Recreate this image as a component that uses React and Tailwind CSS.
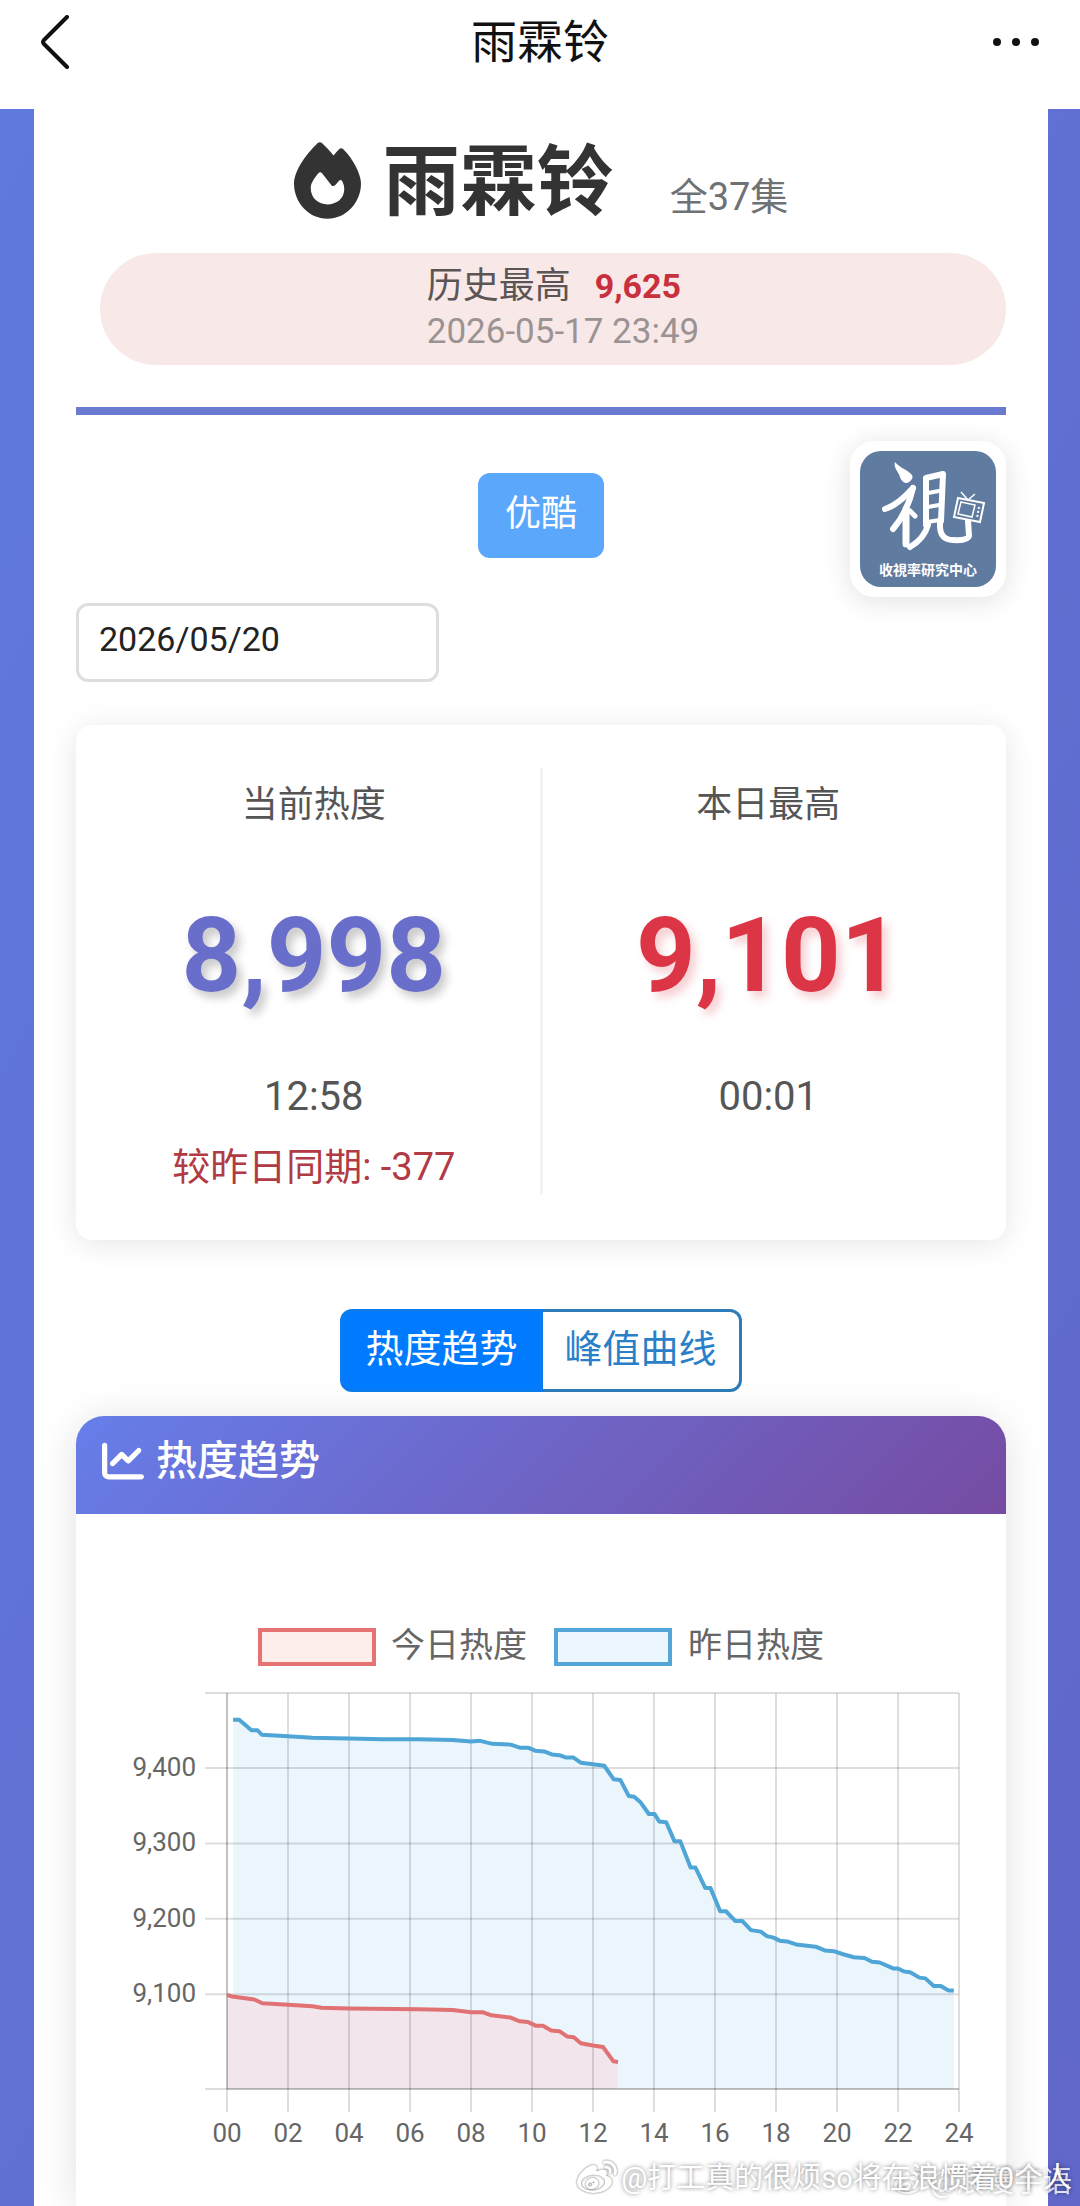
import React, { useState } from "react";
import { FaChartLine, FaFire, FaWeibo } from "react-icons/fa6";

// [hour, heat]
const today = [
  [0, 9099], [0.17, 9097], [0.9, 9093], [1.16, 9088], [2, 9086], [2.8, 9084], [3.1, 9082], [4, 9081],
  [6.3, 9080], [7.4, 9079], [8, 9076], [8.4, 9076], [8.67, 9072], [9.3, 9069], [9.6, 9064], [9.87, 9063],
  [10.14, 9058], [10.36, 9058], [10.63, 9052], [10.9, 9051], [11.15, 9044], [11.37, 9043], [11.6, 9035],
  [12, 9032], [12.33, 9030], [12.67, 9011], [12.82, 9010],
];

const yesterday = [
  [0.2, 9464], [0.4, 9464], [0.8, 9450], [1, 9450], [1.15, 9444], [2, 9442], [2.8, 9440], [4, 9439],
  [5.1, 9438], [6.3, 9438], [7.4, 9437], [8, 9435], [8.3, 9436], [8.7, 9432], [9.3, 9431], [9.6, 9427],
  [9.87, 9427], [10.1, 9423], [10.4, 9422], [10.65, 9418], [10.9, 9417], [11.1, 9414], [11.35, 9414],
  [11.6, 9407], [12, 9405], [12.37, 9403], [12.68, 9385], [12.9, 9384], [13.17, 9363], [13.35, 9362],
  [13.55, 9355], [13.83, 9339], [14.02, 9339], [14.17, 9329], [14.4, 9328], [14.67, 9303], [14.86, 9303],
  [15.2, 9268], [15.36, 9268], [15.68, 9241], [15.85, 9241], [16.17, 9210], [16.36, 9210], [16.67, 9197],
  [16.9, 9197], [17.18, 9185], [17.5, 9183], [17.7, 9177], [17.92, 9175], [18.12, 9171], [18.36, 9170],
  [18.66, 9166], [19.3, 9163], [19.6, 9158], [19.9, 9157], [20.2, 9153], [20.55, 9149], [20.9, 9148],
  [21.15, 9143], [21.4, 9142], [21.86, 9134], [22, 9134], [22.2, 9130], [22.4, 9129], [22.7, 9122],
  [22.9, 9121], [23.17, 9111], [23.4, 9111], [23.66, 9105], [23.83, 9105],
];

const hours = ["00", "02", "04", "06", "08", "10", "12", "14", "16", "18", "20", "22", "24"];
const levels = [9400, 9300, 9200, 9100];

const LEFT = 151;
const RIGHT = 883;
const TOP = 99;
const BOTTOM = 495;

const toX = (hour) => LEFT + hour * 30.5;
const toY = (value) => 174 + (9400 - value) * 0.754;
const toLine = (points) => points.map(([h, v]) => `${toX(h)},${toY(v)}`).join(" ");
const toArea = (points) =>
  `${toX(points[0][0])},${BOTTOM} ${toLine(points)} ${toX(points[points.length - 1][0])},${BOTTOM}`;

const TrendChart = () => (
  <svg viewBox="0 0 930 570" className="w-full" role="img" aria-label="热度趋势">
    {/* Legend */}
    <rect x="184" y="36" width="114" height="34" fill="#fdeeeb" stroke="#e57373" strokeWidth="4" />
    <text x="315" y="63" fontSize="34" fill="#666">今日热度</text>
    <rect x="480" y="36" width="114" height="34" fill="#ebf6fd" stroke="#54a6d8" strokeWidth="4" />
    <text x="612" y="63" fontSize="34" fill="#666">昨日热度</text>

    {/* Filled areas */}
    <polygon points={toArea(yesterday)} fill="#ebf5fc" />
    <polygon points={toArea(today)} fill="#f2e5ec" />

    {/* Grid */}
    <g stroke="#000" strokeOpacity="0.13" strokeWidth="2">
      {hours.map((h, i) => (
        <line key={h} x1={LEFT + i * 61} x2={LEFT + i * 61} y1={TOP} y2={BOTTOM + 23} />
      ))}
      {levels.map((v) => (
        <line key={v} x1={LEFT - 22} x2={RIGHT} y1={toY(v)} y2={toY(v)} />
      ))}
      <line x1={LEFT - 22} x2={RIGHT} y1={TOP} y2={TOP} />
      <line x1={LEFT - 22} x2={RIGHT} y1={BOTTOM} y2={BOTTOM} />
      <line x1={LEFT} x2={LEFT} y1={TOP} y2={BOTTOM} />
      <line x1={LEFT} x2={RIGHT} y1={BOTTOM} y2={BOTTOM} />
    </g>

    {/* Curves */}
    <polyline points={toLine(yesterday)} fill="none" stroke="#4fa5d6" strokeWidth="4" strokeLinejoin="round" />
    <polyline points={toLine(today)} fill="none" stroke="#e07274" strokeWidth="4" strokeLinejoin="round" />

    {/* Axis labels */}
    <g fontSize="26" fill="#666">
      {levels.map((v) => (
        <text key={v} x="120" y={toY(v) + 8} textAnchor="end">
          {v.toLocaleString("en-US")}
        </text>
      ))}
      {hours.map((h, i) => (
        <text key={h} x={LEFT + i * 61} y="548" textAnchor="middle">{h}</text>
      ))}
    </g>
  </svg>
);

const Logo = () => (
  <div className="rounded-3xl bg-white p-[10px] shadow-[0_4px_28px_rgba(0,0,0,0.12)]">
    <svg viewBox="0 0 136 136" className="w-[136px] h-[136px]" role="img" aria-label="收视率研究中心">
      <rect width="136" height="136" rx="21" fill="#5f7ba0" />
      {/* Brush strokes */}
      <path d="M35 11C39 16 45 18 50 22C54 25 53 28 49 31C46 34 41 30 40 26C39 21 33 17 35 11Z" fill="#fff" />
      <g fill="none" stroke="#fff" strokeLinecap="round" strokeLinejoin="round">
        <path d="M25 58Q38 54 53 37" strokeWidth="6" />
        <path d="M53 37Q47 62 33 78" strokeWidth="6" />
        <path d="M46 58L46 93" strokeWidth="7" />
        <path d="M50 60L55 65" strokeWidth="5" />
        <path d="M66 28L66 74" strokeWidth="6" />
        <path d="M66 27L83 23L81 70" strokeWidth="6" />
        <path d="M68 42L79 40M68 56L79 54M67 71L80 69" strokeWidth="4" />
        <path d="M68 74Q64 88 50 96" strokeWidth="6" />
        <path d="M80 72Q79 89 93 89Q108 90 109 85L108 70" strokeWidth="6" />
      </g>
      {/* TV set */}
      <g fill="#5f7ba0" stroke="#fff" strokeWidth="2">
        <path d="M98 47L124 52L120 71L94 66Z" />
        <path d="M101 51L115 54L112 66L98 63Z" strokeWidth="1.5" />
        <path d="M108 49L101 41M108 49L115 43" strokeWidth="1.5" />
        <path d="M119 56L117 67" strokeDasharray="2 2" />
      </g>
      <text x="68" y="124" textAnchor="middle" fontSize="14" fontWeight="700" fill="#fff">收視率研究中心</text>
    </svg>
  </div>
);

const HeatStat = ({ label, value, time, diff, valueClass }) => (
  <div className="flex flex-1 flex-col items-center text-[#555]">
    <p className="mt-[10px] text-4xl leading-[54px]">{label}</p>
    <p className={`mt-16 text-[104px] leading-[120px] font-bold ${valueClass}`}>{value}</p>
    <p className="mt-[54px] text-[40px] leading-[54px]">{time}</p>
    {diff && <p className="mt-4 text-[38px] leading-[54px] text-[#b23a44]">{diff}</p>}
  </div>
);

const App = () => {
  const [date, setDate] = useState("2026/05/20");
  const [tab, setTab] = useState("trend");

  return (
    <div className="relative flex min-h-screen flex-col overflow-hidden bg-white font-[Roboto,'Noto_Sans_CJK_SC',sans-serif]">
      {/* Nav bar */}
      <header className="flex h-[109px] items-start justify-between bg-white px-10 pt-3">
        <button aria-label="返回" className="flex h-[60px] w-20 items-center">
          <svg viewBox="0 0 30 54" className="h-[54px] w-[30px]" fill="none" stroke="#111" strokeWidth="4" strokeLinecap="round" strokeLinejoin="round">
            <path d="M27 2L4 25Q2 27 4 29L27 52" />
          </svg>
        </button>
        <h1 className="text-[46px] leading-[60px] text-[#111]">雨霖铃</h1>
        <button aria-label="更多" className="flex h-[60px] w-20 items-center justify-end">
          <svg viewBox="0 0 48 10" className="h-[10px] w-12" fill="#111">
            <circle cx="5" cy="5" r="4" />
            <circle cx="24" cy="5" r="4" />
            <circle cx="43" cy="5" r="4" />
          </svg>
        </button>
      </header>

      <div className="flex flex-1 flex-col bg-linear-to-br from-[#6079dd] to-[#6067c9] pr-8 pl-[34px]">
        <main className="flex flex-1 flex-col bg-white px-[42px]">
          {/* Title */}
          <div className="mt-[22px] flex items-end justify-center">
            <FaFire className="mb-4 h-[77px] w-[67px] text-[#333]" />
            <h2 className="ml-[22px] text-[77px] leading-[104px] font-bold text-[#333]">雨霖铃</h2>
            <span className="mb-[10px] ml-14 text-[38px] leading-[56px] text-[#6f7275]">全37集</span>
          </div>

          <div className="mt-[18px] ml-6 flex justify-center rounded-full bg-[#f8e9e8] py-[10px]">
            <div className="pl-5 text-[#9b9393]">
              <p className="flex items-center gap-6 text-4xl leading-[46px] text-[#5c5555]">
                历史最高
                <strong className="text-[34px] font-bold text-[#c9303e]">9,625</strong>
              </p>
              <p className="text-[35px] leading-[46px]">2026-05-17 23:49</p>
            </div>
          </div>

          <hr className="mt-[42px] border-t-8 border-[#6a7bcf]" />

          {/* Platform */}
          <div className="mt-[26px] grid grid-cols-3">
            <div />
            <button className="mt-8 h-[85px] justify-self-center rounded-xl bg-[#5aa7fc] px-[27px] pb-1 text-4xl text-white">
              优酷
            </button>
            <div className="justify-self-end">
              <Logo />
            </div>
          </div>

          <input
            type="text"
            aria-label="日期"
            value={date}
            onChange={(e) => setDate(e.target.value)}
            className="mt-[6px] h-[79px] w-[39%] rounded-xl border-3 border-[#dedede] px-5 pb-2 text-[34px] text-[#222]"
          />

          {/* Heat numbers */}
          <section className="mt-[43px] flex rounded-2xl bg-white px-3 pt-[43px] pb-[46px] shadow-[0_4px_30px_rgba(0,0,0,0.1)]">
            <HeatStat
              label="当前热度"
              value="8,998"
              time="12:58"
              diff="较昨日同期: -377"
              valueClass="text-[#6a6ecb] [text-shadow:5px_6px_10px_rgba(0,0,0,0.22)]"
            />
            <div className="w-[3px] bg-[#f3f3f3]" />
            <HeatStat
              label="本日最高"
              value="9,101"
              time="00:01"
              valueClass="text-[#dc3545] [text-shadow:5px_6px_10px_rgba(220,53,69,0.25)]"
            />
          </section>

          {/* Tabs */}
          <div className="mt-[69px] flex justify-center text-[38px] leading-[56px]">
            <button
              onClick={() => setTab("trend")}
              className={`rounded-l-xl border-3 border-[#0a7cf0] px-[22px] pt-[9px] pb-3 ${tab === "trend" ? "bg-[#007bff] text-white" : "text-[#2a80c8]"}`}
            >
              热度趋势
            </button>
            <button
              onClick={() => setTab("peak")}
              className={`rounded-r-xl border-3 border-l-0 border-[#2d7cb8] px-[22px] pt-[9px] pb-3 ${tab === "peak" ? "bg-[#007bff] text-white" : "text-[#2a80c8]"}`}
            >
              峰值曲线
            </button>
          </div>

          {/* Chart card */}
          <section className="mt-6 flex flex-1 flex-col rounded-t-[28px] bg-white shadow-[0_4px_40px_rgba(0,0,0,0.12)]">
            <div className="flex h-[98px] items-center gap-3 rounded-t-[28px] bg-[linear-gradient(135deg,#667eea_0%,#764ba2_100%)] px-[26px] pb-2 text-white">
              <FaChartLine className="size-[42px]" />
              <h3 className="text-[41px] leading-[60px] font-medium">热度趋势</h3>
            </div>
            <div className="mt-20">
              <TrendChart />
            </div>
          </section>
        </main>
      </div>

      {/* Watermarks */}
      <div className="absolute right-2 bottom-2 flex items-center gap-1 text-[29px] leading-8 whitespace-nowrap text-white opacity-80 [text-shadow:0_0_4px_rgba(0,0,0,0.5)]">
        <FaWeibo className="size-8 drop-shadow-[0_0_1px_rgba(0,0,0,0.5)]" />
        @浪漫宇语
      </div>
      <div className="absolute right-2 bottom-2 flex items-center gap-1 text-[29px] leading-8 whitespace-nowrap text-white [text-shadow:0_0_4px_rgba(0,0,0,0.5)]">
        <FaWeibo className="size-10 drop-shadow-[0_0_1px_rgba(0,0,0,0.6)]" />
        @打工真的很烦so将在浪惯着0个人
      </div>
    </div>
  );
};

export default App;
